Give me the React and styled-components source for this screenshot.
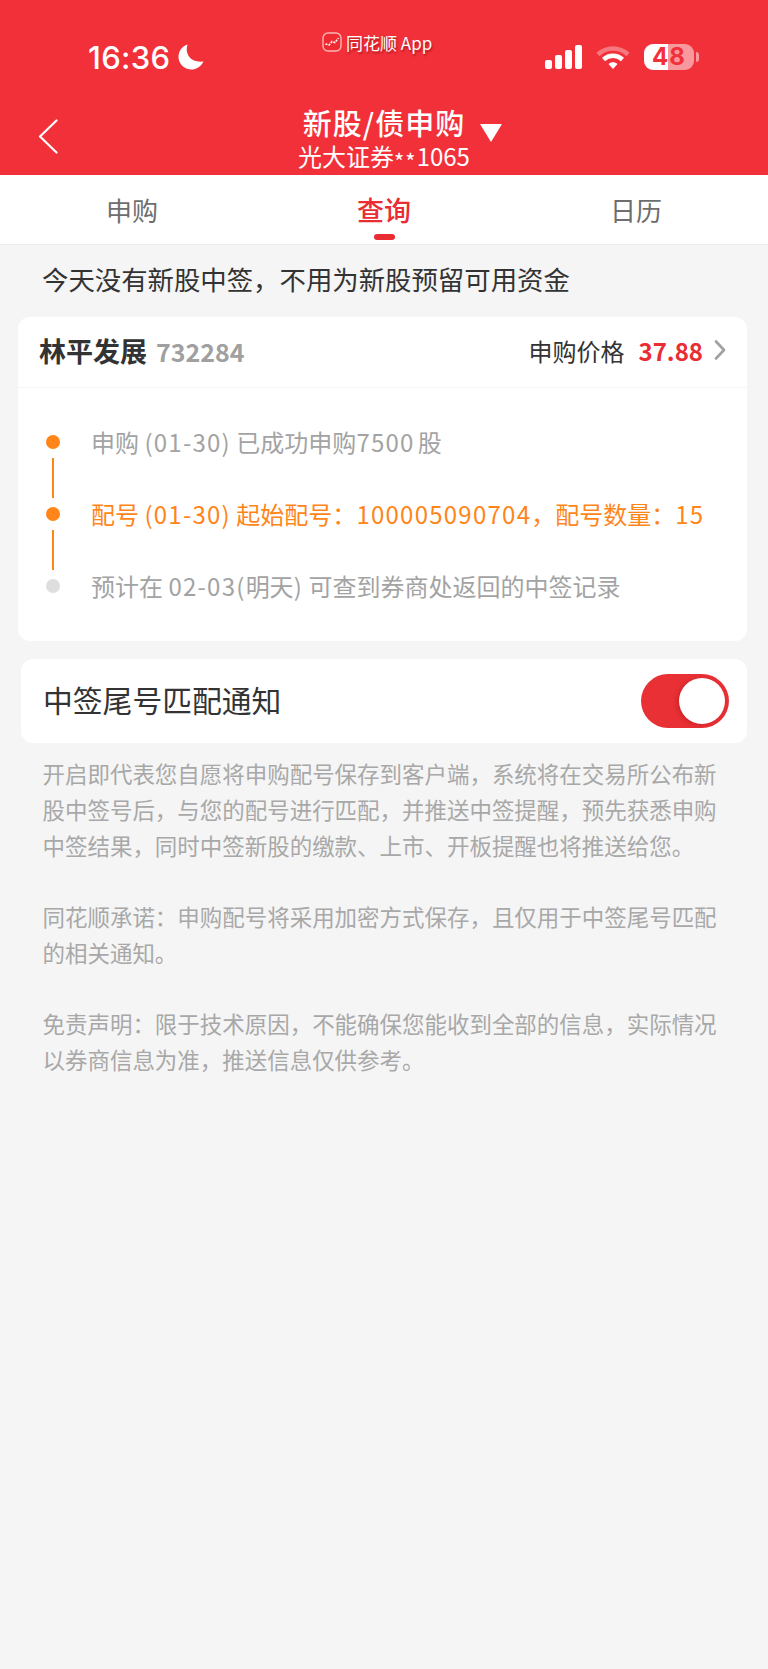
import styled, { createGlobalStyle } from "styled-components";

const red = "#f2303a";
const orange = "#ff8519";
const cjk = `"Noto Sans CJK SC", "Noto Sans", sans-serif`;

const GlobalStyle = createGlobalStyle`
  html, body { margin: 0; padding: 0; background: #f5f5f5; }
  * { box-sizing: border-box; }
  body { font-family: ${cjk}; }
`;

const Page = styled.div`
  width: 768px;
  min-height: 1669px;
  background: #f5f5f5;
  display: flex;
  flex-direction: column;
`;

const RedHeader = styled.header`
  background: ${red};
  height: 175px;
  color: #fff;
  display: flex;
  flex-direction: column;
`;

const StatusBar = styled.div`
  height: 100px;
  padding: 30px 74px 0 88px;
  display: grid;
  grid-template-columns: 234px 1fr auto;
  align-items: start;
`;

const Clock = styled.div`
  display: flex;
  align-items: center;
  gap: 8px;
  height: 54px;
  font-family: Inter, sans-serif;
  font-size: 31px;
  font-weight: 500;
  letter-spacing: 0.3px;
`;

const AppLabel = styled.div`
  display: flex;
  align-items: center;
  gap: 4px;
  height: 24px;
  font-size: 17px;
  text-shadow: 1px 2px 2px rgba(120, 0, 0, 0.5);
`;

const StatusIcons = styled.div`
  display: flex;
  align-items: center;
  gap: 14px;
  height: 54px;
`;

const Battery = styled.div`
  position: relative;
  width: 50px;
  height: 26px;
  border-radius: 9px;
  background: linear-gradient(90deg, #fff 48%, rgba(255, 255, 255, 0.5) 48%);
  color: ${red};
  font-family: Inter, sans-serif;
  font-size: 24px;
  font-weight: 700;
  line-height: 26px;
  text-align: center;
  letter-spacing: 1px;

  &::after {
    content: "";
    position: absolute;
    right: -5px;
    top: 8px;
    width: 3px;
    height: 10px;
    border-radius: 0 3px 3px 0;
    background: rgba(255, 255, 255, 0.5);
  }
`;

const NavBar = styled.div`
  flex: 1;
  display: grid;
  grid-template-columns: 280px 208px 280px;
`;

const BackButton = styled.div`
  padding: 20px 0 0 38px;
`;

const NavTitle = styled.div`
  display: flex;
  flex-direction: column;
  align-items: center;
`;

const TitleText = styled.div`
  font-size: 29px;
  font-weight: 500;
  line-height: 34px;
  letter-spacing: 1px;
  margin-top: 6px;
  white-space: nowrap;
`;

const SubTitle = styled.div`
  font-size: 24px;
  line-height: 30px;
  margin-top: 2px;
  white-space: nowrap;
`;

const Stars = styled.span`
  vertical-align: -4px;
  font-size: 22px;
  letter-spacing: 1px;
`;

const Caret = styled.div`
  padding-top: 25px;
  margin-left: -8px;

  svg {
    display: block;
  }
`;

const Tabs = styled.nav`
  height: 70px;
  padding: 0 6px;
  background: #fff;
  border-bottom: 1px solid #ececec;
  display: grid;
  grid-template-columns: repeat(3, 1fr);
`;

const Tab = styled.div`
  display: flex;
  flex-direction: column;
  align-items: center;
  padding-top: 16px;
  font-size: ${(p) => (p.$active ? "27px" : "26px")};
  font-weight: ${(p) => (p.$active ? 500 : 400)};
  line-height: 38px;
  color: ${(p) => (p.$active ? "#ea2c33" : "#6e6e6e")};

  &::after {
    content: "";
    display: ${(p) => (p.$active ? "block" : "none")};
    width: 21px;
    height: 6px;
    margin-top: 5px;
    border-radius: 3px;
    background: #ea2c33;
  }
`;

const Notice = styled.p`
  margin: 0;
  padding: 0 0 5px 42px;
  height: 72px;
  display: flex;
  align-items: center;
  font-size: 26.4px;
  color: #333;
  white-space: nowrap;
`;

const Card = styled.section`
  margin: 0 21px 0 18px;
  background: #fff;
  border-radius: 12px;
`;

const CardHead = styled.div`
  height: 71px;
  padding: 0 21px 4px 21px;
  border-bottom: 1px solid #f5f5f5;
  display: flex;
  align-items: center;
  justify-content: space-between;
`;

const Stock = styled.div`
  display: flex;
  align-items: baseline;
  gap: 9px;
`;

const StockName = styled.span`
  font-size: 27px;
  font-weight: 700;
  color: #333;
`;

const StockCode = styled.span`
  font-size: 25px;
  font-weight: 700;
  color: #a0a0a0;
`;

const Price = styled.div`
  display: flex;
  align-items: center;
  font-size: 24px;
  color: #333;
`;

const PriceValue = styled.span`
  margin: 0 11px 0 14px;
  font-size: 24px;
  font-weight: 700;
  color: #ea2c33;
`;

const Timeline = styled.div`
  padding: 38px 28px 39px;
`;

const Step = styled.div`
  display: flex;
  gap: 31px;
  height: ${(p) => (p.$last ? "32px" : "72px")};
`;

const Rail = styled.div`
  width: 14px;
  padding-top: 9px;
  display: flex;
  flex-direction: column;
  align-items: center;
  gap: 9px;
`;

const Dot = styled.span`
  width: 14px;
  height: 14px;
  border-radius: 50%;
  flex: none;
  background: ${(p) => (p.$done ? orange : "#dedede")};
`;

const RailLine = styled.span`
  width: 2px;
  height: 40px;
  flex: none;
  background: ${orange};
`;

const StepText = styled.div`
  font-size: 24px;
  line-height: 32px;
  white-space: nowrap;
  color: ${(p) => (p.$done ? orange : "#a3a3a3")};
`;

// digits in the step lines run wider than the CJK font's own figures
const Num = styled.span`
  letter-spacing: 1.25px;
  margin-right: ${(p) => p.$after || 0}px;
`;

const SwitchCard = styled.section`
  margin: 18px 21px 0;
  height: 84px;
  padding: 0 18px 0 22px;
  background: #fff;
  border-radius: 12px;
  display: flex;
  align-items: center;
  justify-content: space-between;
`;

const SwitchLabel = styled.span`
  font-size: 29.8px;
  color: #333;
  white-space: nowrap;
  margin-top: -4px;
`;

const Toggle = styled.div`
  width: 88px;
  height: 54px;
  padding: 4px;
  border-radius: 27px;
  background: #e83035;
  display: flex;
  justify-content: flex-end;
`;

const Knob = styled.span`
  width: 46px;
  height: 46px;
  border-radius: 50%;
  background: #fff;
  box-shadow: -2px 1px 4px rgba(120, 0, 0, 0.25);
`;

const Notes = styled.div`
  padding: 12px 0 0 42.5px;
  width: 720px;
`;

const Note = styled.p`
  margin: 0 0 35px;
  font-size: 22.47px;
  line-height: 36px;
  color: #a8a8a8;
`;

function SignalBars() {
  return (
    <svg width="37" height="24" viewBox="0 0 37 24" fill="#fff">
      <rect x="0" y="15" width="7" height="9" rx="2" />
      <rect x="10" y="10" width="7" height="14" rx="2" />
      <rect x="20" y="5" width="7" height="19" rx="2" />
      <rect x="30" y="0" width="7" height="24" rx="2" />
    </svg>
  );
}

function WifiGlyph() {
  return (
    <svg width="34" height="25" viewBox="0 0 34 25" fill="none">
      <path d="M2 9.5 C10.5 1.5 23.5 1.5 32 9.5" stroke="#fff" strokeOpacity="0.35" strokeWidth="4.5" />
      <path d="M7.5 14.5 C13 9.5 21 9.5 26.5 14.5" stroke="#fff" strokeWidth="4.5" />
      <path d="M12.5 19 L17 24 L21.5 19 C19 16.8 15 16.8 12.5 19 Z" fill="#fff" />
    </svg>
  );
}

function MoonGlyph() {
  return (
    <svg width="26" height="26" viewBox="0 0 26 26" fill="#fff">
      <path d="M9.5 0.5 C6.5 9.5 12 19 25.5 17.5 C22.8 23 17.8 25.8 12.8 25.5 C5.6 25 0.5 19.4 0.5 12.8 C0.5 7 4.4 2 9.5 0.5 Z" />
    </svg>
  );
}

function AppMark() {
  return (
    <svg width="20" height="20" viewBox="0 0 20 20" fill="none">
      <rect x="1" y="1" width="18" height="18" rx="5" fill="#ee2b33" stroke="#ffb4b4" strokeWidth="1.4" />
      <path d="M3.5 12 L7 13 L10 9.5 L13 10.5 L16.5 6" stroke="#fff" strokeWidth="1.6" strokeDasharray="2 1.2" />
    </svg>
  );
}

function BackArrow() {
  return (
    <svg width="20" height="35" viewBox="0 0 20 35" fill="none">
      <path d="M18.5 1.5 L2 17.5 L18.5 33.5" stroke="#fff" strokeWidth="2.2" strokeLinecap="round" strokeLinejoin="round" />
    </svg>
  );
}

function RowArrow() {
  return (
    <svg width="12" height="20" viewBox="0 0 12 20" fill="none">
      <path d="M2 1.5 L10 10 L2 18.5" stroke="#a0a0a0" strokeWidth="2.6" strokeLinecap="round" strokeLinejoin="round" />
    </svg>
  );
}

export default function App() {
  return (
    <>
      <GlobalStyle />
      <Page>
        <RedHeader>
          <StatusBar>
            <Clock>
              16:36
              <MoonGlyph />
            </Clock>
            <AppLabel>
              <AppMark />
              同花顺 App
            </AppLabel>
            <StatusIcons>
              <SignalBars />
              <WifiGlyph />
              <Battery>48</Battery>
            </StatusIcons>
          </StatusBar>
          <NavBar>
            <BackButton>
              <BackArrow />
            </BackButton>
            <NavTitle>
              <TitleText>新股/债申购</TitleText>
              <SubTitle>
                光大证券<Stars>**</Stars>1065
              </SubTitle>
            </NavTitle>
            <Caret>
              <svg width="22" height="18" viewBox="0 0 22 18">
                <path d="M0 0 H22 L11 18 Z" fill="#fff" />
              </svg>
            </Caret>
          </NavBar>
        </RedHeader>

        <Tabs>
          <Tab>申购</Tab>
          <Tab $active>查询</Tab>
          <Tab>日历</Tab>
        </Tabs>

        <Notice>今天没有新股中签，不用为新股预留可用资金</Notice>

        <Card>
          <CardHead>
            <Stock>
              <StockName>林平发展</StockName>
              <StockCode>732284</StockCode>
            </Stock>
            <Price>
              申购价格
              <PriceValue>37.88</PriceValue>
              <RowArrow />
            </Price>
          </CardHead>
          <Timeline>
            <Step>
              <Rail>
                <Dot $done />
                <RailLine />
              </Rail>
              <StepText>
                申购 <Num>(01-30)</Num> 已成功申购<Num $after={3}>7500</Num>股
              </StepText>
            </Step>
            <Step>
              <Rail>
                <Dot $done />
                <RailLine />
              </Rail>
              <StepText $done>
                配号 <Num>(01-30)</Num> 起始配号：<Num>100005090704</Num>，配号数量：<Num>15</Num>
              </StepText>
            </Step>
            <Step $last>
              <Rail>
                <Dot />
              </Rail>
              <StepText>
                预计在 <Num>02-03(</Num>明天<Num>)</Num> 可查到券商处返回的中签记录
              </StepText>
            </Step>
          </Timeline>
        </Card>

        <SwitchCard>
          <SwitchLabel>中签尾号匹配通知</SwitchLabel>
          <Toggle>
            <Knob />
          </Toggle>
        </SwitchCard>

        <Notes>
          <Note>开启即代表您自愿将申购配号保存到客户端，系统将在交易所公布新股中签号后，与您的配号进行匹配，并推送中签提醒，预先获悉申购中签结果，同时中签新股的缴款、上市、开板提醒也将推送给您。</Note>
          <Note>同花顺承诺：申购配号将采用加密方式保存，且仅用于中签尾号匹配的相关通知。</Note>
          <Note>免责声明：限于技术原因，不能确保您能收到全部的信息，实际情况以券商信息为准，推送信息仅供参考。</Note>
        </Notes>
      </Page>
    </>
  );
}
